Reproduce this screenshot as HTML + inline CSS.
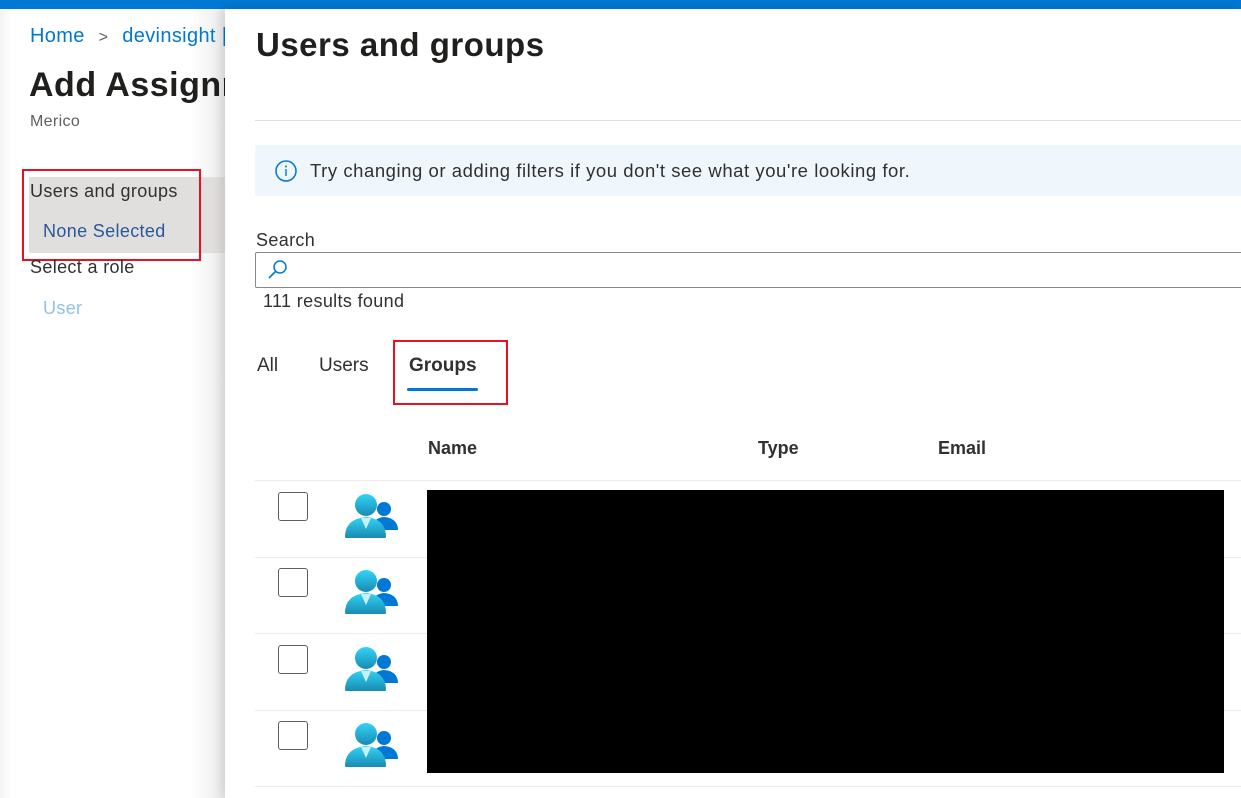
<!DOCTYPE html>
<html><head><style>
*{margin:0;padding:0;box-sizing:border-box}
body{width:1241px;height:798px;overflow:hidden;position:relative;font-family:"Segoe UI","Liberation Sans",sans-serif;background:#fff;color:#323130}
.abs{position:absolute;white-space:nowrap}
.t{letter-spacing:0.35px}
#top{left:0;top:0;width:1241px;height:9px;background:#0078d4}
#left{left:0;top:9px;width:240px;height:789px;background:linear-gradient(to right,#f4f4f4 0,#fff 12px,#fff 190px,#ececec 225px)}
#panel{left:225px;top:9px;width:1016px;height:789px;background:#fff;box-shadow:-4px 0 10px rgba(0,0,0,.12)}
.cb{width:30px;height:29px;border:1px solid #605e5c;border-radius:3px;background:#fff}
.row{left:255px;width:986px;height:1px;background:#edebe9}
</style></head><body>
<div id="top" class="abs"></div>
<div id="left" class="abs"></div>
<div class="abs t" style="left:30px;top:25px;font-size:20px;color:#0078d4">Home <span style="color:#605e5c;font-size:16px;margin:0 8px">&gt;</span> devinsight |</div>
<div class="abs" style="left:29px;top:66px;font-size:34px;font-weight:600;color:#201f1e;letter-spacing:0.5px">Add Assignment</div>
<div class="abs t" style="left:30px;top:113px;font-size:16px;color:#605e5c">Merico</div>
<div class="abs" style="left:29px;top:177px;width:200px;height:76px;background:#e1dfdd"></div>
<div class="abs t" style="left:30px;top:181px;font-size:18px">Users and groups</div>
<div class="abs t" style="left:43px;top:221px;font-size:18px;color:#2b579a">None Selected</div>
<div class="abs" style="left:22px;top:169px;width:179px;height:92px;border:2px solid #e81123"></div>
<div class="abs t" style="left:30px;top:257px;font-size:18px">Select a role</div>
<div class="abs t" style="left:43px;top:298px;font-size:18px;color:#8fc1ea">User</div>
<div id="panel" class="abs"></div>
<div class="abs" style="left:256px;top:26px;font-size:33px;font-weight:600;color:#201f1e;letter-spacing:0.5px">Users and groups</div>
<div class="abs" style="left:255px;top:120px;width:986px;height:1px;background:#e1dfdd"></div>
<div class="abs" style="left:255px;top:145px;width:986px;height:51px;background:#eff6fc"></div>
<svg class="abs" style="left:274px;top:159px" width="24" height="24" viewBox="0 0 24 24"><circle cx="12" cy="12" r="10" fill="none" stroke="#0078d4" stroke-width="1.5"/><circle cx="12" cy="7.5" r="1" fill="#0078d4"/><rect x="11.3" y="10" width="1.4" height="7" fill="#0078d4"/></svg>
<div class="abs" style="left:310px;top:160px;font-size:18.5px;letter-spacing:0.55px">Try changing or adding filters if you don't see what you're looking for.</div>
<div class="abs t" style="left:256px;top:230px;font-size:18px">Search</div>
<div class="abs" style="left:255px;top:252px;width:990px;height:36px;border:1px solid #8a8886;border-radius:2px"></div>
<svg class="abs" style="left:266px;top:259px" width="24" height="22" viewBox="0 0 24 22"><circle cx="14" cy="8" r="6" fill="none" stroke="#0078d4" stroke-width="1.5"/><line x1="9.5" y1="12.5" x2="3" y2="19" stroke="#0078d4" stroke-width="1.6"/></svg>
<div class="abs t" style="left:263px;top:291px;font-size:18px">111 results found</div>
<div class="abs" style="left:257px;top:355px;font-size:19px">All</div>
<div class="abs" style="left:319px;top:355px;font-size:19px">Users</div>
<div class="abs" style="left:409px;top:355px;font-size:19px;font-weight:600">Groups</div>
<div class="abs" style="left:407px;top:388px;width:71px;height:3px;background:#0078d4;border-radius:2px"></div>
<div class="abs" style="left:393px;top:340px;width:115px;height:65px;border:2px solid #e81123"></div>
<div class="abs" style="left:428px;top:438px;font-size:18px;font-weight:600">Name</div>
<div class="abs" style="left:758px;top:438px;font-size:18px;font-weight:600">Type</div>
<div class="abs" style="left:938px;top:438px;font-size:18px;font-weight:600">Email</div>
<div class="abs row" style="top:480px"></div>
<div class="abs row" style="top:557px"></div>
<div class="abs row" style="top:633px"></div>
<div class="abs row" style="top:710px"></div>
<div class="abs row" style="top:786px"></div>
<div class="abs cb" style="left:278px;top:492px"></div>
<div class="abs cb" style="left:278px;top:568px"></div>
<div class="abs cb" style="left:278px;top:645px"></div>
<div class="abs cb" style="left:278px;top:721px"></div>
<svg width="0" height="0" style="position:absolute"><defs><linearGradient id="g" x1="0" y1="0" x2="0" y2="1"><stop offset="0" stop-color="#32d4f5"/><stop offset="1" stop-color="#198ab3"/></linearGradient></defs></svg>
<svg class="abs" style="left:344px;top:493px" width="56" height="46" viewBox="0 0 56 46"><circle cx="40" cy="16" r="7" fill="#0078d4"/><path d="M28 37 Q28 25 40 24 Q53 25 54 36 L54 37Z" fill="#0078d4"/><circle cx="22" cy="12" r="11" fill="url(#g)"/><path d="M1 44 Q1 26 22 24 Q42 26 42 44 Q42 45 40 45 L3 45 Q1 45 1 44Z" fill="url(#g)"/><path d="M17 25 L27 25 L22 36Z" fill="#c7f0fc"/></svg>
<svg class="abs" style="left:344px;top:569px" width="56" height="46" viewBox="0 0 56 46"><circle cx="40" cy="16" r="7" fill="#0078d4"/><path d="M28 37 Q28 25 40 24 Q53 25 54 36 L54 37Z" fill="#0078d4"/><circle cx="22" cy="12" r="11" fill="url(#g)"/><path d="M1 44 Q1 26 22 24 Q42 26 42 44 Q42 45 40 45 L3 45 Q1 45 1 44Z" fill="url(#g)"/><path d="M17 25 L27 25 L22 36Z" fill="#c7f0fc"/></svg>
<svg class="abs" style="left:344px;top:646px" width="56" height="46" viewBox="0 0 56 46"><circle cx="40" cy="16" r="7" fill="#0078d4"/><path d="M28 37 Q28 25 40 24 Q53 25 54 36 L54 37Z" fill="#0078d4"/><circle cx="22" cy="12" r="11" fill="url(#g)"/><path d="M1 44 Q1 26 22 24 Q42 26 42 44 Q42 45 40 45 L3 45 Q1 45 1 44Z" fill="url(#g)"/><path d="M17 25 L27 25 L22 36Z" fill="#c7f0fc"/></svg>
<svg class="abs" style="left:344px;top:722px" width="56" height="46" viewBox="0 0 56 46"><circle cx="40" cy="16" r="7" fill="#0078d4"/><path d="M28 37 Q28 25 40 24 Q53 25 54 36 L54 37Z" fill="#0078d4"/><circle cx="22" cy="12" r="11" fill="url(#g)"/><path d="M1 44 Q1 26 22 24 Q42 26 42 44 Q42 45 40 45 L3 45 Q1 45 1 44Z" fill="url(#g)"/><path d="M17 25 L27 25 L22 36Z" fill="#c7f0fc"/></svg>
<div class="abs" style="left:427px;top:490px;width:797px;height:283px;background:#000"></div>
</body></html>
